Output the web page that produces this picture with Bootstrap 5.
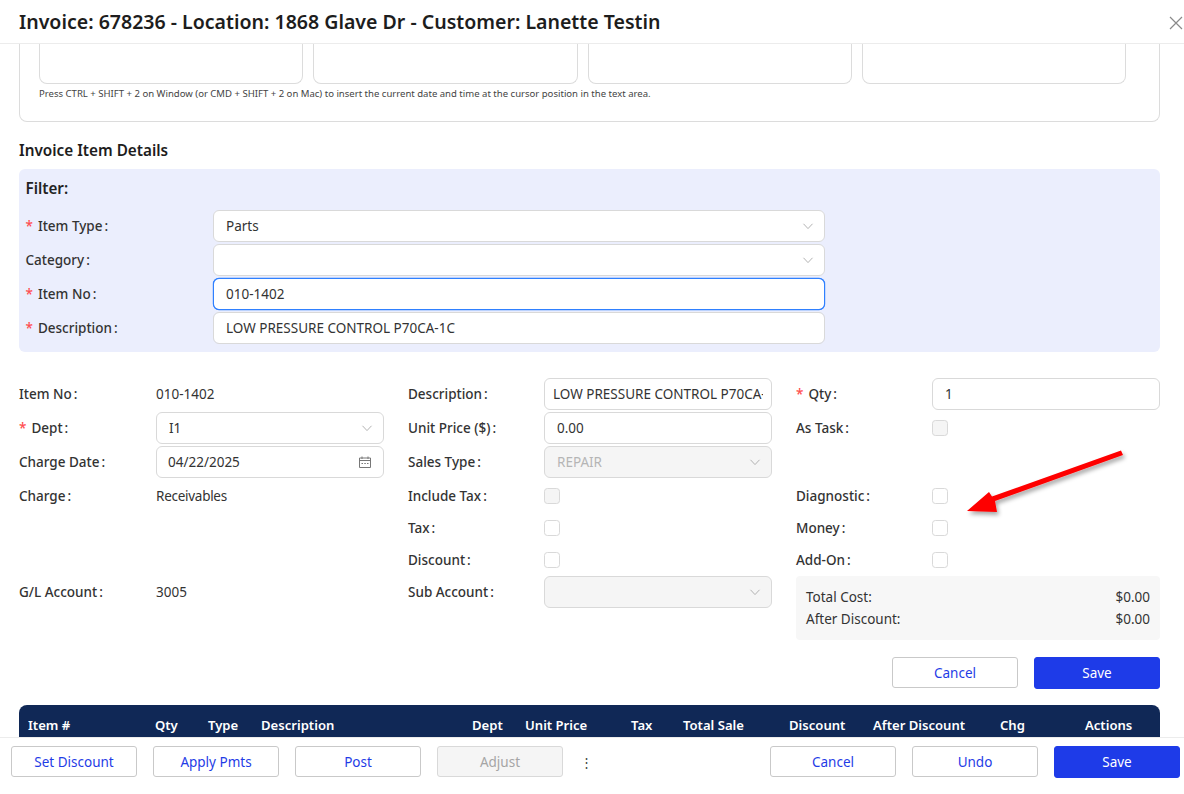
<!DOCTYPE html>
<html lang="en"><head><meta charset="utf-8"><title>Invoice</title>
<link href="https://cdn.jsdelivr.net/npm/bootstrap@5.3.0/dist/css/bootstrap.min.css" rel="stylesheet">
<style>
html,body{height:100%;overflow:hidden}
body{font-family:"Noto Sans","Liberation Sans",sans-serif;font-size:13.5px;color:#333;background:#fff}
.shell{height:794px;position:relative}
.head-bar{height:44px;border-bottom:1px solid #ececec;padding:0 19px;flex:none}
.head-title{font-size:19.55px;font-weight:600;color:#1d1d1d;margin:0}
.x-btn{position:absolute;right:0;top:12px;width:16px;height:16px;padding:0;border:0;background:none;color:#8a8a8a}
.body-area{flex:1 1 auto;overflow:hidden;padding:0 24px 0 19px;min-height:0}
.notes-box{border:1px solid #dcdcdc;border-top:0;border-radius:0 0 8px 8px;height:78px;padding:0 33px 0 19px}
.note-col{flex:1 1 0;height:40px;border:1px solid #dcdcdc;border-top:0;border-radius:0 0 8px 8px;background:#fff}
.note-hint{font-size:9.56px;color:#444;margin-top:3px;line-height:14px}
.sec-title{font-size:15.3px;font-weight:600;color:#1d1d1d;margin:18px 0 9px;line-height:20px}
.filter-panel{background:#ebeefd;border-radius:6px;height:183px;padding:9px 6px 0 6.5px;margin-bottom:26px}
.filter-title{font-size:15.2px;font-weight:600;color:#222;line-height:20px;margin-bottom:12px}
.f-row{height:32px;margin-bottom:2px;width:799px}
.f-row:nth-of-type(5){margin-top:1px}
.f-label{width:187.5px;flex:none}
.lbl{font-weight:500;color:#333}
.lbl::after{content:":";margin-left:2px}
.req::before{content:"*";color:#ff4d4f;margin-right:5px}
.val-tight{letter-spacing:-.27px}
.form-control.fld,.form-select.fld{height:32px;min-height:32px;font-size:13.5px;color:#333;border:1px solid #d9d9d9;border-radius:6px;padding:0 12px;line-height:30px}
.form-select.fld{padding-right:30px;background-image:url("data:image/svg+xml,%3csvg xmlns='http://www.w3.org/2000/svg' viewBox='0 0 12 12'%3e%3cpath fill='none' stroke='%23aaa' stroke-width='.9' d='M1.5 3.8 6 8.6l4.5-4.8'/%3e%3c/svg%3e");background-size:12px 12px;background-position:right 10px center}
.fld:disabled{background-color:#f5f5f5;color:#b5b5b5;opacity:1}
.form-control.fld.active-fld{border-color:#2f80ff;box-shadow:0 0 0 .2px #2f80ff}
.form-control.fld.tight{padding:0 8px}
.form-control.fld.date-fld{padding-left:11px}
.main-grid{display:grid;grid-template-columns:365px 364px 364px;column-gap:24px;width:1141px}
.m-row{height:32px}
.m-row.gap-after{margin-bottom:2px}
.m-row.skip{height:64px}
.m-label{width:137px;flex:none}
.m-label2{width:136px;flex:none}
.chk{width:16px;height:16px;margin:0;border:1px solid #d9d9d9;border-radius:4px;flex:none}
.chk:disabled{background-color:#f5f5f5;opacity:1}
.sum-box{background:#f7f7f7;border-radius:4px;height:64px;padding:10px}
.sum-box>div{line-height:22px}
.act-row{margin-top:17px;gap:16px;width:1141px}
.act-btn{width:126px;height:31px;padding:1px 0 0;font-size:13.5px;border-radius:3px;border:1px solid #c9c9c9;color:#1f3ce6;background:#fff}
.act-btn:hover{color:#1f3ce6;background:#fff;border-color:#c9c9c9}
.act-btn.solid{background:#1e3be8;border-color:#1e3be8;color:#fff;height:32px}
.act-btn.solid:hover{background:#1e3be8;color:#fff}
.act-btn:disabled{background:#f5f5f5;color:#a5a5a5;border-color:#d9d9d9;opacity:1}
.grid-wrap{margin-top:16px;background:#102856;border-radius:8px 8px 0 0;height:60px;width:1141px}
.grid-head{table-layout:fixed;width:1141px;color:#fff;border-collapse:collapse}
.grid-head th{font-weight:600;font-size:13.1px;padding:11px 0 0 9px;line-height:18px;white-space:nowrap}
.foot-bar{height:57px;flex:none;border-top:1px solid #ececec;background:#fff;padding:8px 4px 0 11px;position:relative;z-index:2}
.dots{width:14px;height:32px;color:#444;font-size:13px;line-height:32px;margin-right:auto}
.cal-wrap{position:relative}
.cal-ico{position:absolute;right:12px;top:9px;width:14px;height:14px;color:#777}
.arrow-mark{position:absolute;left:950px;top:440px;width:190px;height:90px;pointer-events:none;z-index:3;overflow:visible}
</style></head>
<body>
<div class="shell d-flex flex-column">
  <div class="head-bar d-flex align-items-center"><h1 class="head-title">Invoice: 678236 - Location: 1868 Glave Dr - Customer: Lanette Testin</h1>
    <button class="x-btn" aria-label="Close"><svg viewBox="0 0 16 16" width="16" height="16"><path d="M2 2l12 12M14 2 2 14" stroke="currentColor" stroke-width="1.2" fill="none"/></svg></button></div>
  <div class="body-area">
    <div class="notes-box">
      <div class="d-flex" style="gap:10px"><div class="note-col"></div><div class="note-col"></div><div class="note-col"></div><div class="note-col"></div></div>
      <div class="note-hint">Press CTRL + SHIFT + 2 on Window (or CMD + SHIFT + 2 on Mac) to insert the current date and time at the cursor position in the text area.</div>
    </div>
    <div class="sec-title">Invoice Item Details</div>
    <div class="filter-panel">
      <div class="filter-title">Filter:</div>
      <div class="f-row d-flex align-items-center"><div class="f-label"><span class="lbl req">Item Type</span></div><select class="form-select fld"><option>Parts</option></select></div>
      <div class="f-row d-flex align-items-center"><div class="f-label"><span class="lbl">Category</span></div><select class="form-select fld"><option></option></select></div>
      <div class="f-row d-flex align-items-center"><div class="f-label"><span class="lbl req">Item No</span></div><input class="form-control fld active-fld" value="010-1402"></div>
      <div class="f-row d-flex align-items-center"><div class="f-label"><span class="lbl req">Description</span></div><input class="form-control fld" value="LOW PRESSURE CONTROL P70CA-1C"></div>
    </div>
    <div class="main-grid">
      <div>
        <div class="m-row gap-after d-flex align-items-center"><div class="m-label"><span class="lbl">Item No</span></div><span>010-1402</span></div>
        <div class="m-row gap-after d-flex align-items-center"><div class="m-label"><span class="lbl req">Dept</span></div><select class="form-select fld"><option>I1</option></select></div>
        <div class="m-row gap-after d-flex align-items-center"><div class="m-label"><span class="lbl">Charge Date</span></div><div class="cal-wrap flex-grow-1"><input class="form-control fld date-fld" value="04/22/2025"><svg class="cal-ico" viewBox="0 0 14 14"><path d="M1.5 3h11v9.5h-11zM1.5 5.500h11M4 1.500V4M10 1.500V4" fill="none" stroke="currentColor"/><path d="M3.500 8h1.500v1H3.500zM6.300 8h1.500v1H6.300zM9 8h1.500v1H9z" fill="currentColor"/></svg></div></div>
        <div class="m-row d-flex align-items-center"><div class="m-label"><span class="lbl">Charge</span></div><span class="val-tight">Receivables</span></div>
        <div class="m-row skip"></div>
        <div class="m-row d-flex align-items-center"><div class="m-label"><span class="lbl">G/L Account</span></div><span>3005</span></div>
      </div>
      <div>
        <div class="m-row gap-after d-flex align-items-center"><div class="m-label2"><span class="lbl">Description</span></div><input class="form-control fld tight" value="LOW PRESSURE CONTROL P70CA-1C"></div>
        <div class="m-row gap-after d-flex align-items-center"><div class="m-label2"><span class="lbl">Unit Price ($)</span></div><input class="form-control fld" value="0.00"></div>
        <div class="m-row gap-after d-flex align-items-center"><div class="m-label2"><span class="lbl">Sales Type</span></div><select class="form-select fld" disabled><option>REPAIR</option></select></div>
        <div class="m-row d-flex align-items-center"><div class="m-label2"><span class="lbl">Include Tax</span></div><input type="checkbox" class="form-check-input chk" disabled></div>
        <div class="m-row d-flex align-items-center"><div class="m-label2"><span class="lbl">Tax</span></div><input type="checkbox" class="form-check-input chk"></div>
        <div class="m-row d-flex align-items-center"><div class="m-label2"><span class="lbl">Discount</span></div><input type="checkbox" class="form-check-input chk"></div>
        <div class="m-row d-flex align-items-center"><div class="m-label2"><span class="lbl">Sub Account</span></div><select class="form-select fld" disabled><option></option></select></div>
      </div>
      <div>
        <div class="m-row gap-after d-flex align-items-center"><div class="m-label2"><span class="lbl req">Qty</span></div><input class="form-control fld" value="1"></div>
        <div class="m-row gap-after d-flex align-items-center"><div class="m-label2"><span class="lbl">As Task</span></div><input type="checkbox" class="form-check-input chk" disabled></div>
        <div class="m-row gap-after"></div>
        <div class="m-row d-flex align-items-center"><div class="m-label2"><span class="lbl">Diagnostic</span></div><input type="checkbox" class="form-check-input chk"></div>
        <div class="m-row d-flex align-items-center"><div class="m-label2"><span class="lbl">Money</span></div><input type="checkbox" class="form-check-input chk"></div>
        <div class="m-row d-flex align-items-center"><div class="m-label2"><span class="lbl">Add-On</span></div><input type="checkbox" class="form-check-input chk"></div>
        <div class="sum-box"><div class="d-flex justify-content-between"><span>Total Cost:</span><span>$0.00</span></div><div class="d-flex justify-content-between"><span>After Discount:</span><span>$0.00</span></div></div>
      </div>
    </div>
    <div class="act-row d-flex justify-content-end align-items-start"><button class="btn act-btn">Cancel</button><button class="btn act-btn solid">Save</button></div>
    <div class="grid-wrap">
      <table class="grid-head"><colgroup><col style="width:127px"><col style="width:53px"><col style="width:53px"><col style="width:211px"><col style="width:53px"><col style="width:106px"><col style="width:52px"><col style="width:106px"><col style="width:84px"><col style="width:127px"><col style="width:85px"><col></colgroup>
      <thead><tr><th>Item #</th><th>Qty</th><th>Type</th><th>Description</th><th>Dept</th><th>Unit Price</th><th>Tax</th><th>Total Sale</th><th>Discount</th><th>After Discount</th><th>Chg</th><th>Actions</th></tr></thead></table>
    </div>
  </div>
  <div class="foot-bar d-flex align-items-start gap-3">
    <button class="btn act-btn">Set Discount</button><button class="btn act-btn">Apply Pmts</button><button class="btn act-btn">Post</button><button class="btn act-btn" disabled>Adjust</button>
    <span class="dots text-center">&#8942;</span>
    <button class="btn act-btn">Cancel</button><button class="btn act-btn">Undo</button><button class="btn act-btn solid">Save</button>
  </div>
  <svg class="arrow-mark" viewBox="0 0 190 90"><defs><filter id="sh" x="-10%" y="-20%" width="130%" height="150%"><feDropShadow dx="2" dy="3" stdDeviation="2" flood-color="#000" flood-opacity=".35"/></filter></defs><path filter="url(#sh)" fill="#fe0000" d="M171 10.500 173 15 45 61 47 72 17 71 39 52 42 56.500Z"/></svg>
</div>
<script src="https://cdn.jsdelivr.net/npm/bootstrap@5.3.0/dist/js/bootstrap.bundle.min.js"></script>
</body></html>
